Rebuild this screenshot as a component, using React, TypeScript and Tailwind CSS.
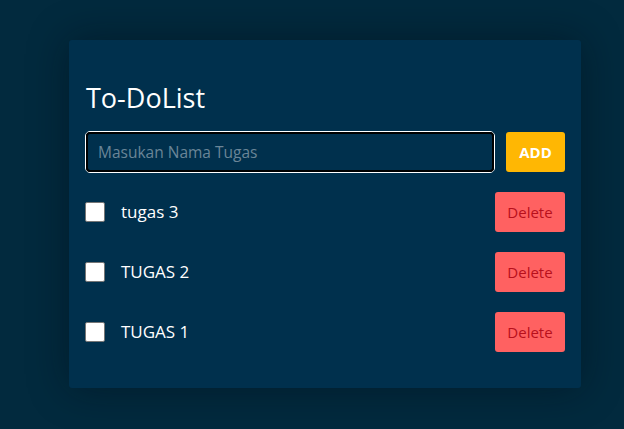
import { useState } from "react";

type Task = { id: number; name: string; done: boolean };

function App() {
    const [tasks, setTasks] = useState<Task[]>([
        { id: 3, name: "tugas 3", done: false },
        { id: 2, name: "TUGAS 2", done: false },
        { id: 1, name: "TUGAS 1", done: false },
    ]);
    const [name, setName] = useState("");

    function addTask() {
        if (!name.trim()) return;
        setTasks([{ id: Date.now(), name, done: false }, ...tasks]);
        setName("");
    }

    return (
        <div
            className="min-h-[429px] bg-[#022a3e] pt-10 pl-[69px]"
            style={{ fontFamily: '"Open Sans", "Noto Sans", sans-serif' }}
        >
            <div className="w-[512px] rounded-[3px] bg-[#00304d] px-4 pt-10 pb-9 shadow-[0_0_40px_rgba(0,10,20,0.45)]">
                <h1 className="mb-[15px] pl-px text-[27px] leading-[36px] text-white">To-DoList</h1>

                <div className="flex items-center gap-[11px]">
                    <input
                        type="text"
                        value={name}
                        onChange={(e) => setName(e.target.value)}
                        placeholder="Masukan Nama Tugas"
                        className="h-[42px] flex-1 rounded-[5px] border border-white bg-[#00304d] px-3 text-[15.5px] text-white outline outline-2 -outline-offset-[3px] outline-black placeholder:text-[#6a8597]"
                    />
                    <button
                        onClick={addTask}
                        className="h-10 w-[59px] rounded-[3px] bg-[#ffb703] text-[15px] font-bold text-white"
                    >
                        ADD
                    </button>
                </div>

                <ul className="mt-[19px] flex flex-col gap-5">
                    {tasks.map((t) => (
                        <li key={t.id} className="flex items-center">
                            <input
                                type="checkbox"
                                checked={t.done}
                                onChange={() =>
                                    setTasks(tasks.map((o) => (o.id === t.id ? { ...o, done: !o.done } : o)))
                                }
                                className="h-5 w-5 appearance-none rounded-[2px] border border-[#767676] bg-white checked:bg-[#ffb703]"
                            />
                            <span className="ml-4 flex-1 text-[17px] text-white">{t.name}</span>
                            <button
                                onClick={() => setTasks(tasks.filter((o) => o.id !== t.id))}
                                className="h-10 w-[70px] rounded-[3px] bg-[#ff6161] text-[15px] text-[#b8101c]"
                            >
                                Delete
                            </button>
                        </li>
                    ))}
                </ul>
            </div>
        </div>
    );
}

export default App;
